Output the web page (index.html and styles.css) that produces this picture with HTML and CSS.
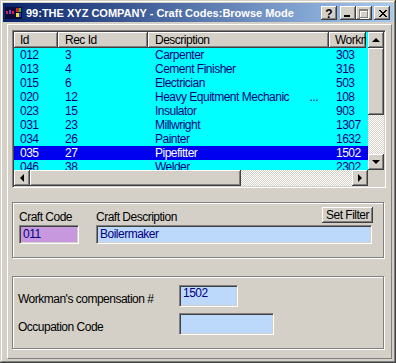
FILE: index.html
```html
<!DOCTYPE html>
<html lang="en">
<head>
    <meta charset="UTF-8">
    <title>Craft Codes:Browse Mode</title>
    <link rel="stylesheet" href="styles.css">
</head>
<body>
    <div class="window">
        <div class="titlebar">
            <svg class="app-icon" width="17" height="12" viewBox="0 0 17 12" shape-rendering="crispEdges">
                <rect width="17" height="12" fill="#0c0c3a"/>
                <rect x="1" y="4" width="2" height="3" fill="#d02050"/>
                <rect x="4" y="3" width="2" height="4" fill="#8040c0"/>
                <rect x="7" y="4" width="2" height="3" fill="#d02050"/>
                <rect x="11" y="1" width="3" height="4" fill="#e02020"/>
                <rect x="14" y="1" width="2" height="4" fill="#20c040"/>
                <rect x="11" y="6" width="3" height="4" fill="#f0e020"/>
                <rect x="14" y="6" width="2" height="4" fill="#2040e0"/>
            </svg>
            <span class="title">99:THE XYZ COMPANY - Craft Codes:Browse Mode</span>
            <div class="caption-buttons">
                <div class="cap help">?</div>
                <div class="cap min"><span class="min-bar"></span></div>
                <div class="cap max">
                    <svg width="10" height="10" viewBox="0 0 10 10" shape-rendering="crispEdges">
                        <path d="M1 1h9v9h-9z M2 3v6h7v-6z" fill="#fff" fill-rule="evenodd"/>
                        <path d="M0 0h9v9h-9z M1 2v6h7v-6z" fill="#808080" fill-rule="evenodd"/>
                    </svg>
                </div>
                <div class="cap close">
                    <svg width="8" height="7" viewBox="0 0 8 7" shape-rendering="crispEdges">
                        <path d="M0 0h2v1h-2z M6 0h2v1h-2z M1 1h2v1h-2z M5 1h2v1h-2z M2 2h4v1h-4z M3 3h2v1h-2z M2 4h4v1h-4z M1 5h2v1h-2z M5 5h2v1h-2z M0 6h2v1h-2z M6 6h2v1h-2z" fill="#000"/>
                    </svg>
                </div>
            </div>
        </div>

        <div class="form">
            <div class="listview">
                <div class="list-main">
                    <div class="list-head">
                        <div class="hcell c-id">Id</div>
                        <div class="hcell c-rec">Rec Id</div>
                        <div class="hcell c-desc">Description</div>
                        <div class="hcell c-work">Workman's Comp #</div>
                    </div>
                    <div class="list-body">
                        <div class="row"><span class="cell c-id">012</span><span class="cell c-rec">3</span><span class="cell c-desc">Carpenter</span><span class="cell c-work">303</span></div>
                        <div class="row"><span class="cell c-id">013</span><span class="cell c-rec">4</span><span class="cell c-desc">Cement Finisher</span><span class="cell c-work">316</span></div>
                        <div class="row"><span class="cell c-id">015</span><span class="cell c-rec">6</span><span class="cell c-desc">Electrician</span><span class="cell c-work">503</span></div>
                        <div class="row"><span class="cell c-id">020</span><span class="cell c-rec">12</span><span class="cell c-desc clipped"><span>Heavy Equitment Mechanic</span><span>...</span></span><span class="cell c-work">108</span></div>
                        <div class="row"><span class="cell c-id">023</span><span class="cell c-rec">15</span><span class="cell c-desc">Insulator</span><span class="cell c-work">903</span></div>
                        <div class="row"><span class="cell c-id">031</span><span class="cell c-rec">23</span><span class="cell c-desc">Millwright</span><span class="cell c-work">1307</span></div>
                        <div class="row"><span class="cell c-id">034</span><span class="cell c-rec">26</span><span class="cell c-desc">Painter</span><span class="cell c-work">1632</span></div>
                        <div class="row selected"><span class="cell c-id">035</span><span class="cell c-rec">27</span><span class="cell c-desc">Pipefitter</span><span class="cell c-work">1502</span></div>
                        <div class="row"><span class="cell c-id">046</span><span class="cell c-rec">38</span><span class="cell c-desc">Welder</span><span class="cell c-work">2302</span></div>
                    </div>
                </div>
                <div class="vscroll">
                    <div class="sb-btn"><span class="arrow up"></span></div>
                    <div class="sb-thumb v"></div>
                    <div class="sb-track"></div>
                    <div class="sb-btn"><span class="arrow down"></span></div>
                </div>
                <div class="hscroll">
                    <div class="sb-btn"><span class="arrow left"></span></div>
                    <div class="sb-thumb h"></div>
                    <div class="sb-track"></div>
                    <div class="sb-btn"><span class="arrow right"></span></div>
                </div>
                <div class="corner"></div>
            </div>

            <div class="group filter">
                <label class="lbl">Craft Code</label>
                <div class="desc-head">
                    <label class="lbl">Craft Description</label>
                    <div class="btn">Set Filter</div>
                </div>
                <div class="field code">011</div>
                <div class="field desc">Boilermaker</div>
            </div>

            <div class="group extra">
                <label class="lbl">Workman's compensation #</label>
                <div class="field tall comp">1502</div>
                <label class="lbl">Occupation Code</label>
                <div class="field tall occ"></div>
            </div>
        </div>
    </div>
</body>
</html>
```

FILE: styles.css
```css
/* Classic Windows dialog look */
* {
    box-sizing: border-box;
}

body {
    margin: 0;
    font-family: 'Liberation Sans', Arial, sans-serif;
    font-size: 12px;
    letter-spacing: -0.5px;
    background: #d4d0c8;
    color: #000;
}

.window {
    width: 396px;
    height: 363px;
    padding: 3px;
    display: flex;
    flex-direction: column;
    background: #d4d0c8;
    box-shadow: inset -1px -1px #404040, inset 1px 1px #d4d0c8,
                inset -2px -2px #808080, inset 2px 2px #fff;
}

/* title bar */
.titlebar {
    height: 19px;
    flex: none;
    display: flex;
    align-items: center;
    padding: 0 3px 0 2px;
    background: linear-gradient(to right, #0a246a, #a6caf0);
    color: #fff;
}

.app-icon {
    flex: none;
}

.title {
    flex: 1;
    margin-left: 4px;
    font-weight: bold;
    font-size: 11px;
    letter-spacing: 0;
    white-space: nowrap;
}

.caption-buttons {
    display: flex;
    align-self: flex-end;
    margin-bottom: 2px;
}

.cap,
.sb-btn,
.sb-thumb,
.hcell,
.btn {
    background: #d4d0c8;
    box-shadow: inset -1px -1px #404040, inset 1px 1px #fff,
                inset -2px -2px #808080, inset 2px 2px #d4d0c8;
}

.cap {
    width: 16px;
    height: 14px;
    display: flex;
    justify-content: center;
    align-items: center;
    color: #000;
}

.cap.help {
    margin-right: 3px;
    font-weight: bold;
    font-size: 12px;
    letter-spacing: 0;
    padding-top: 1px;
}

.cap.min {
    align-items: flex-end;
    justify-content: flex-start;
    padding: 0 0 3px 4px;
}

.min-bar {
    width: 6px;
    height: 2px;
    background: #000;
}

.cap.max {
    margin-right: 2px;
    padding-top: 1px;
}

.cap.close {
    padding-left: 1px;
}

/* form panel */
.form {
    flex: 1;
    margin: 2px 1px 1px 4px;
    border: 1px solid;
    border-color: #fff #808080 #808080 #fff;
    padding: 5px 5px 0 4px;
}

/* list view */
.listview {
    height: 158px;
    display: grid;
    grid-template-columns: 1fr 16px;
    grid-template-rows: 1fr 16px;
    border: 1px solid;
    border-color: #808080 #fff #fff #808080;
    padding: 1px;
    box-shadow: inset 1px 1px #404040, inset -1px -1px #d4d0c8;
    background: #d4d0c8;
}

.list-main {
    overflow: hidden;
    background: #00ffff;
    display: flex;
    flex-direction: column;
}

.list-head {
    display: flex;
    height: 16px;
    flex: none;
}

.hcell {
    line-height: 16px;
    padding-left: 6px;
    white-space: nowrap;
    overflow: hidden;
}

.c-id { width: 44px; flex: none; }
.c-rec { width: 90px; flex: none; padding-left: 7px; }
.c-desc { width: 181px; flex: none; padding-left: 7px; }
.c-work { width: 37px; flex: none; }

.row {
    display: flex;
    height: 14px;
    line-height: 14px;
    color: #000080;
}

.row.selected {
    background: #0000f0;
    color: #fff;
}

.cell {
    padding-left: 6px;
    white-space: nowrap;
    overflow: hidden;
}

.cell.c-rec,
.cell.c-desc {
    padding-left: 7px;
}

.cell.c-work {
    padding-left: 7px;
}

.cell.clipped {
    display: flex;
    justify-content: space-between;
    padding-right: 11px;
}

/* scroll bars */
.vscroll {
    display: flex;
    flex-direction: column;
}

.hscroll {
    display: flex;
}

.sb-btn {
    width: 16px;
    height: 16px;
    flex: none;
    display: flex;
    justify-content: center;
    align-items: center;
}

.sb-thumb.v {
    height: 67px;
    flex: none;
}

.sb-thumb.h {
    width: 211px;
    flex: none;
}

.sb-track {
    flex: 1;
    background: repeating-conic-gradient(#fff 0 25%, #d4d0c8 0 50%) 0 0 / 2px 2px;
}

.corner {
    background: #d4d0c8;
}

.arrow {
    width: 0;
    height: 0;
    border: 4px solid transparent;
}

.arrow.up {
    border-bottom-color: #000;
    border-top-width: 0;
    margin-top: -1px;
}

.arrow.down {
    border-top-color: #000;
    border-bottom-width: 0;
}

.arrow.left {
    border-right-color: #000;
    border-left-width: 0;
    margin-left: -1px;
}

.arrow.right {
    border-left-color: #000;
    border-right-width: 0;
}

/* group boxes */
.group {
    margin-right: 2px;
    border: 1px solid #808080;
    box-shadow: inset 1px 1px #fff, 1px 1px #fff;
}

.filter {
    margin-top: 14px;
    height: 56px;
    padding: 4px 10px 0 6px;
    display: grid;
    grid-template-columns: 60px 1fr;
    grid-template-rows: 17px 19px;
    column-gap: 17px;
    row-gap: 1px;
}

.lbl {
    line-height: 14px;
    padding-top: 3px;
    white-space: nowrap;
}

.desc-head {
    display: flex;
    justify-content: space-between;
    align-items: flex-start;
}

.btn {
    width: 51px;
    height: 16px;
    line-height: 16px;
    text-align: center;
}

.field {
    height: 19px;
    line-height: 14px;
    padding: 1px 3px 0;
    border: 1px solid;
    border-color: #808080 #fff #fff #808080;
    box-shadow: inset 1px 1px #404040, inset -1px -1px #d4d0c8;
    background: #bcd8fa;
    color: #000080;
    white-space: nowrap;
}

.field.code {
    background: #c898de;
}

.field.desc {
    width: calc(100% - 1px);
}

.extra {
    margin-top: 18px;
    height: 73px;
    padding: 8px 0 0 5px;
    display: grid;
    grid-template-columns: 161px auto;
    grid-template-rows: 22px 22px;
    row-gap: 6px;
    justify-items: start;
}

.extra .lbl {
    align-self: end;
    padding-top: 0;
    margin-bottom: 1px;
}

.field.tall {
    height: 22px;
    padding-top: 0;
}

.field.comp {
    width: 59px;
}

.field.occ {
    width: 95px;
}
```
